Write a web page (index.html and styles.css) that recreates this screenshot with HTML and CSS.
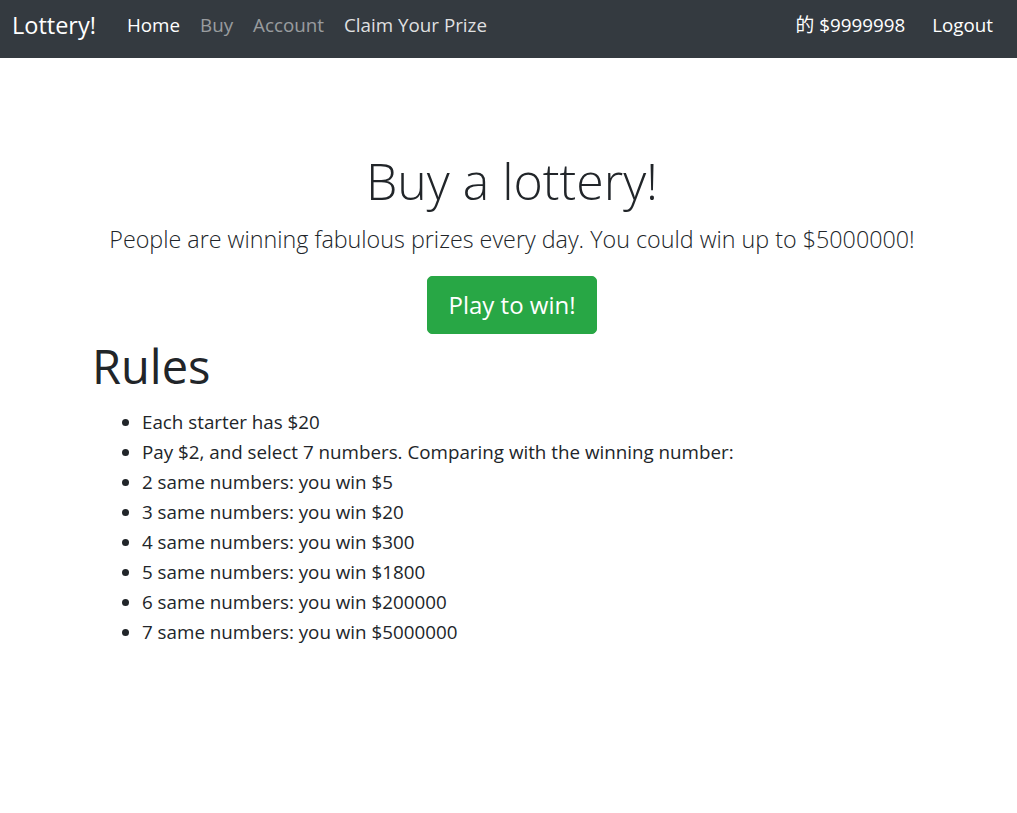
FILE: index.html
```html
<!DOCTYPE html>
<html lang="en">
<head>
<meta charset="utf-8">
<title>Lottery!</title>
<link rel="stylesheet" href="styles.css">
</head>
<body>
<nav class="navbar">
  <a class="brand" href="#">Lottery!</a>
  <ul class="nav-links">
    <li><a class="nav-link active" href="#">Home</a></li>
    <li><a class="nav-link muted" href="#">Buy</a></li>
    <li><a class="nav-link muted" href="#">Account</a></li>
    <li><a class="nav-link" href="#">Claim Your Prize</a></li>
  </ul>
  <ul class="nav-right">
    <li><span class="nav-link balance">的 $9999998</span></li>
    <li><a class="nav-link active" href="#">Logout</a></li>
  </ul>
</nav>
<main class="hero">
  <h1 class="display">Buy a lottery!</h1>
  <p class="lead">People are winning fabulous prizes every day. You could win up to $5000000!</p>
  <a class="btn-play" href="#">Play to win!</a>
</main>
<section class="rules">
  <h2 class="rules-title">Rules</h2>
  <ul class="rules-list">
    <li>Each starter has $20</li>
    <li>Pay $2, and select 7 numbers. Comparing with the winning number:</li>
    <li>2 same numbers: you win $5</li>
    <li>3 same numbers: you win $20</li>
    <li>4 same numbers: you win $300</li>
    <li>5 same numbers: you win $1800</li>
    <li>6 same numbers: you win $200000</li>
    <li>7 same numbers: you win $5000000</li>
  </ul>
</section>
</body>
</html>
```
FILE: styles.css
```css
* { box-sizing: border-box; }
html, body {
  margin: 0;
  padding: 0;
  background: #fff;
  color: #212529;
  font-family: "Open Sans", "Noto Sans", "Noto Sans CJK SC", sans-serif;
}
a { text-decoration: none; }
ul { list-style: none; margin: 0; padding: 0; }

.navbar {
  display: flex;
  align-items: center;
  height: 58px;
  padding: 0 14px 8px 12px;
  background: #343a40;
}
.brand {
  color: #fff;
  font-size: 23.5px;
  line-height: 32px;
  margin-right: 21px;
}
.nav-links, .nav-right {
  display: flex;
  align-items: center;
}
.nav-right { margin-left: auto; }
.nav-link {
  display: block;
  padding: 0 10px;
  font-size: 18.8px;
  line-height: 32px;
  color: rgba(255, 255, 255, 0.86);
  font-family: "Open Sans", "Noto Sans CJK SC", sans-serif;
}
.nav-link.active { color: #fff; }
.nav-link.muted { color: rgba(255, 255, 255, 0.5); }
.balance { color: #fff; margin-right: 7px; }

.hero {
  display: flex;
  flex-direction: column;
  align-items: center;
  padding: 93px 0 0 7px;
  text-align: center;
}
.display {
  margin: 0;
  font-size: 50px;
  line-height: 60px;
  font-weight: 300;
}
.lead {
  margin: 13px 0 22px;
  font-size: 23.3px;
  line-height: 30px;
  font-weight: 300;
}
.btn-play {
  display: inline-block;
  padding: 10px 20px;
  font-size: 24px;
  line-height: 36px;
  color: #fff;
  background: #28a745;
  border: 1px solid #28a745;
  border-radius: 5px;
}

.rules {
  padding: 4px 0 0 92px;
}
.rules-title {
  margin: 0;
  font-size: 47px;
  line-height: 56px;
  font-weight: 400;
}
.rules-list {
  margin-top: 13px;
  padding-left: 50px;
  list-style: disc;
}
.rules-list li {
  font-size: 18.8px;
  line-height: 30px;
}
```
